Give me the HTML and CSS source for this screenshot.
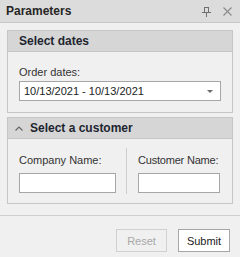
FILE: index.html
```html
<!DOCTYPE html>
<html lang="en">

<head>
    <meta charset="UTF-8">
    <title>Parameters</title>
    <link rel="stylesheet" href="styles.css">
</head>

<body>
    <div class="panel">
        <div class="titlebar">
            <span class="title">Parameters</span>
            <span class="tools">
                <svg class="pin" width="9" height="10" viewBox="0 0 9 10">
                    <path d="M2 0.5h5M2.5 1v4M6.5 1v4M0 5.5h9M4.5 6v4" stroke="#707070" stroke-width="1" fill="none"/>
                </svg>
                <svg class="close" width="9" height="9" viewBox="0 0 9 9">
                    <path d="M0.5 0.5l8 8M8.5 0.5l-8 8" stroke="#8a8a8a" stroke-width="1.1" fill="none"/>
                </svg>
            </span>
        </div>

        <div class="content">
            <div class="group">
                <div class="group-head">Select dates</div>
                <div class="group-body">
                    <div class="label">Order dates:</div>
                    <div class="combo">
                        <span>10/13/2021 - 10/13/2021</span>
                        <span class="arrow"></span>
                    </div>
                </div>
            </div>

            <div class="group second">
                <div class="group-head">
                    <svg class="chevron" width="8" height="5" viewBox="0 0 8 5">
                        <path d="M0.5 4.5l3.5-3.5 3.5 3.5" stroke="#666" stroke-width="1.2" fill="none"/>
                    </svg>
                    Select a customer
                </div>
                <div class="group-body columns">
                    <div class="col company">
                        <div class="label">Company Name:</div>
                        <div class="field"></div>
                    </div>
                    <div class="divider"></div>
                    <div class="col customer">
                        <div class="label">Customer Name:</div>
                        <div class="field"></div>
                    </div>
                </div>
            </div>
        </div>

        <div class="footer">
            <button class="btn disabled">Reset</button>
            <button class="btn">Submit</button>
        </div>
    </div>
</body>

</html>
```

FILE: styles.css
```css
body {
    margin: 0;
    background-color: #f0f0f0;
    font-family: 'Liberation Sans', Arial, sans-serif;
    font-size: 11px;
    color: #333;
}

.panel {
    width: 240px;
    height: 257px;
    overflow: hidden;
}

.titlebar {
    height: 22px;
    display: flex;
    align-items: center;
    justify-content: space-between;
    padding: 0 8px 0 6px;
    background-color: #dcdcdc;
    border-bottom: 1px solid #c8c8c8;
}

.title {
    font-size: 12px;
    font-weight: bold;
    color: #262626;
}

.tools {
    display: flex;
    align-items: center;
    gap: 12px;
}

.pin {
    margin-top: 1px;
}

.content {
    padding: 7px 7px 11px;
}

.group {
    border: 1px solid #c6c6c6;
}

.second {
    margin-top: 4px;
}

.group-head {
    height: 20px;
    display: flex;
    align-items: center;
    gap: 7px;
    padding-left: 11px;
    background-color: #d6d6d6;
    border-bottom: 1px solid #c6c6c6;
    font-size: 12px;
    font-weight: bold;
    color: #1e2530;
}

.second .group-head {
    padding-left: 7px;
}

.group-body {
    padding: 13px 11px 11px;
}

.label {
    height: 14px;
    line-height: 14px;
    color: #333;
    white-space: nowrap;
}

.combo {
    margin-top: 2px;
    height: 18px;
    display: flex;
    align-items: center;
    justify-content: space-between;
    padding: 0 7px 0 4px;
    background-color: #fff;
    border: 1px solid #a6a6a6;
    color: #222;
}

.arrow {
    width: 0;
    height: 0;
    border-left: 3px solid transparent;
    border-right: 3px solid transparent;
    border-top: 3px solid #6a6a6a;
}

.columns {
    display: flex;
    padding: 9px 11px 9px;
}

.col {
    padding: 5px 0 1px;
}

.company {
    width: 97px;
}

.customer {
    width: 82px;
}

.customer .label {
    letter-spacing: -0.2px;
}

.divider {
    width: 1px;
    margin: 0 11px 0 10px;
    background-color: #cdcdcd;
}

.field {
    margin-top: 6px;
    height: 18px;
    background-color: #fff;
    border: 1px solid #a6a6a6;
}

.footer {
    display: flex;
    justify-content: flex-end;
    gap: 11px;
    padding: 13px 10px 4px;
    border-top: 1px solid #cfcfcf;
}

.btn {
    height: 23px;
    width: 52px;
    padding: 0;
    background-color: #fff;
    border: 1px solid #a6a6a6;
    font-family: 'Liberation Sans', Arial, sans-serif;
    font-size: 11px;
    color: #222;
}

.btn.disabled {
    width: 51px;
    background-color: #f0f0f0;
    border-color: #d0d0d0;
    color: #a8a8a8;
}
```
